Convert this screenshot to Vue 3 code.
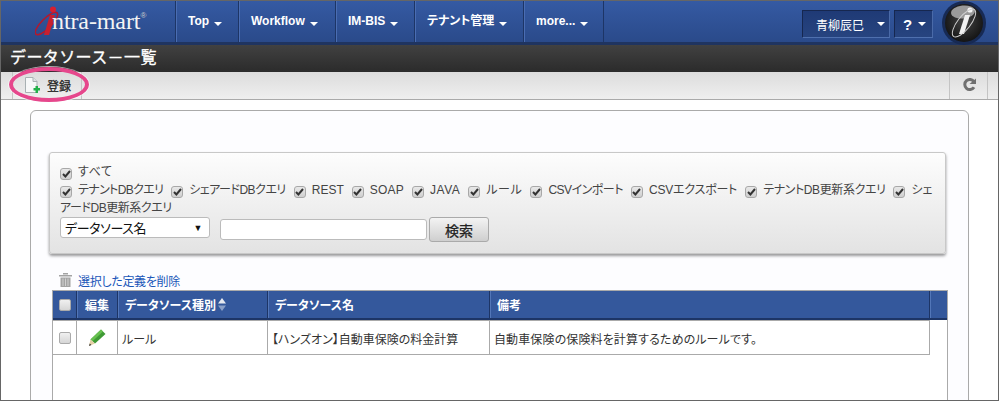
<script setup>
const menus = [
  { label: 'Top', cls: 'w-top' },
  { label: 'Workflow', cls: 'w-workflow' },
  { label: 'IM-BIS', cls: 'w-bis' },
  { label: 'テナント管理', cls: 'w-tenant' },
  { label: 'more...', cls: 'w-more' }
]
const filters = [
  { label: 'テナントDBクエリ', ls: -0.65 },
  { label: 'シェアードDBクエリ', ls: -0.5 },
  { label: 'REST', ls: 0 },
  { label: 'SOAP', ls: 0.25 },
  { label: 'JAVA', ls: 0.5 },
  { label: 'ルール', ls: 0.6 },
  { label: 'CSVインポート', ls: -0.5 },
  { label: 'CSVエクスポート', ls: -0.2 },
  { label: 'テナントDB更新系クエリ', ls: -0.4 }
]
</script>

<template>
  <div class="page">
    <header class="nav">
      <div class="logo">
        <svg class="logo-mark" width="26" height="34" viewBox="0 0 26 34">
          <ellipse cx="11.5" cy="17.5" rx="15" ry="5" transform="rotate(-45 11.5 17.5)" fill="none" stroke="#b5182c" stroke-width="1.5"/>
          <circle cx="18" cy="3.5" r="3" fill="#d81f30"/>
          <path d="M15 9 L20 9 L14 29 L9 29 Z" fill="#c8202f"/>
        </svg>
        <span class="logo-text">ntra-mart</span><span class="logo-reg">®</span>
      </div>
      <div v-for="m in menus" :key="m.label" class="menu" :class="m.cls">
        <span>{{ m.label }}</span><i class="caret"></i>
      </div>
      <div class="nav-right">
        <div class="nbtn user">青柳辰巳<i class="caret"></i></div>
        <div class="nbtn help"><b>?</b><i class="caret"></i></div>
        <svg class="badge" width="44" height="44" viewBox="0 0 44 44">
          <defs>
            <radialGradient id="bd" cx="50%" cy="45%" r="55%">
              <stop offset="0" stop-color="#444"/>
              <stop offset="1" stop-color="#141414"/>
            </radialGradient>
          </defs>
          <circle cx="22" cy="22" r="22" fill="#172a54"/>
          <circle cx="22" cy="22" r="19" fill="url(#bd)"/>
          <ellipse cx="21" cy="11" rx="12" ry="6.5" transform="rotate(-6 21 11)" fill="#9a9a9a"/>
          <circle cx="28" cy="9" r="2.6" fill="#f4f4f4"/>
          <path d="M23 14 L28 14 L22 33 L17 33 Z" fill="#f1f1f1"/>
          <ellipse cx="22" cy="22" rx="17" ry="6.5" transform="rotate(-52 22 22)" fill="none" stroke="#cfcfcf" stroke-width="1"/>
        </svg>
      </div>
    </header>

    <div class="title">データソース－一覧</div>

    <div class="toolbar">
      <div class="reg">
        <svg width="15" height="17" viewBox="0 0 15 17">
          <path d="M.5 .5 H8 L12 4.5 V15.5 H.5 Z" fill="#f7f8f8" stroke="#a9b1b3"/>
          <path d="M8 .5 V4.5 H12" fill="#dfe4e6" stroke="#a9b1b3"/>
          <path d="M8.5 11 H10.5 V9 H13 V11 H15 V13.5 H13 V16 H10.5 V13.5 H8.5 Z" fill="#23b04a"/>
        </svg>
        <span>登録</span>
      </div>
      <div class="tool-right">
        <svg width="14" height="13" viewBox="0 0 14 13">
          <path d="M12 3.8 A5 5 0 1 0 12 9.2" fill="none" stroke="#707070" stroke-width="3"/>
          <path d="M7.5 6 H14 V0.5 Z" fill="#707070"/>
        </svg>
      </div>
      <span class="ring"></span>
    </div>

    <main class="content">
      <section class="card">
        <div class="panel">
          <div class="checks">
            <label class="chk all"><span class="cb"><svg width="9" height="8" viewBox="0 0 9 8"><path d="M1 4 L3.4 6.5 L8 1" fill="none" stroke="#333" stroke-width="2"/></svg></span>すべて</label>
            <br>
            <label v-for="f in filters" :key="f.label" class="chk" :style="{ letterSpacing: f.ls + 'px' }"><span class="cb"><svg width="9" height="8" viewBox="0 0 9 8"><path d="M1 4 L3.4 6.5 L8 1" fill="none" stroke="#333" stroke-width="2"/></svg></span>{{ f.label }}</label>
            <label class="chk last"><span class="cb"><svg width="9" height="8" viewBox="0 0 9 8"><path d="M1 4 L3.4 6.5 L8 1" fill="none" stroke="#333" stroke-width="2"/></svg></span>シェ</label>
            <br>
            <span class="cont">アードDB更新系クエリ</span>
          </div>
          <div class="search">
            <div class="select"><span>データソース名</span><i>▼</i></div>
            <div class="input"></div>
            <div class="btn">検索</div>
          </div>
        </div>

        <div class="del">
          <svg width="13" height="14" viewBox="0 0 13 14">
            <path d="M0 2 H13 V3.5 H0 Z M4 0 H9 V1.5 H4 Z" fill="#a3a3a3"/>
            <path d="M1.5 4.5 H11.5 V14 H1.5 Z" fill="#a3a3a3"/>
            <path d="M4 5.5 V13 M6.5 5.5 V13 M9 5.5 V13" stroke="#d0d0d0"/>
          </svg>
          <a>選択した定義を削除</a>
        </div>

        <div class="table">
          <div class="thead">
            <div class="th c"><span class="box"></span></div>
            <div class="th c">編集</div>
            <div class="th">データソース種別
              <svg class="sort" width="8" height="13" viewBox="0 0 8 13">
                <path d="M4 0 L8 5.5 H0 Z" fill="#e6e9f0"/>
                <path d="M0 7.5 H8 L4 13 Z" fill="#8aa0c8"/>
              </svg>
            </div>
            <div class="th">データソース名</div>
            <div class="th">備考</div>
            <div class="th end"></div>
          </div>
          <div class="tr">
            <div class="td c"><span class="box"></span></div>
            <div class="td c">
              <svg width="17" height="17" viewBox="0 0 17 17">
                <path d="M12 0.5 L16.5 5 L6 14.5 L1.5 10.5 Z" fill="#3f9a35"/>
                <path d="M12 0.5 L14 2.5 L3.5 12.3 L1.5 10.5 Z" fill="#67c04f"/>
                <path d="M1.5 10.5 L6 14.5 L0 17 Z" fill="#e3cfa5"/>
                <path d="M0.8 14.5 L2.4 16 L0 17 Z" fill="#333"/>
              </svg>
            </div>
            <div class="td">ルール</div>
            <div class="td">【ハンズオン】自動車保険の料金計算</div>
            <div class="td note">自動車保険の保険料を計算するためのルールです。</div>
          </div>
        </div>
      </section>
    </main>
  </div>
</template>

<style>
html, body { margin: 0; padding: 0; background: #fff; overflow: hidden; }
</style>

<style scoped>
.page {
  box-sizing: border-box;
  width: 999px;
  height: 401px;
  border: 1px solid #666;
  overflow: hidden;
  display: flex;
  flex-direction: column;
  font-family: "Liberation Sans", "Noto Sans CJK JP", sans-serif;
  font-feature-settings: "palt" 1;
  font-size: 12px;
  color: #333;
  background: #fff;
}
.nav {
  flex: none;
  height: 44px;
  box-sizing: border-box;
  display: flex;
  background: linear-gradient(#355aa3, #2a4a8a);
  border-bottom: 3px solid #1f3460;
}
.logo {
  width: 174px;
  box-sizing: border-box;
  display: flex;
  align-items: flex-start;
  padding: 5px 0 0 34px;
}
.logo-text {
  font-family: "Liberation Serif", serif;
  font-size: 24px;
  line-height: 30px;
  color: #f4f4f4;
  margin-left: -9px;
  letter-spacing: -.1px;
}
.logo-reg { color: #ccc; font-size: 8px; line-height: 10px; margin-top: 5px; }
.menu {
  box-sizing: border-box;
  height: 41px;
  display: flex;
  align-items: flex-start;
  gap: 5px;
  padding: 13px 0 0 12px;
  border-left: 1px solid #1d3566;
  box-shadow: inset 1px 0 0 #4a6db3;
  color: #fff;
  font-weight: bold;
  font-size: 12px;
  line-height: 15px;
  white-space: nowrap;
}
.w-top { width: 63px; }
.w-workflow { width: 97px; }
.w-bis { width: 79px; }
.w-tenant { width: 109px; }
.w-more { width: 81px; border-right: 1px solid #1d3566; }
.menu .caret { margin-top: 8px; }
.caret {
  display: inline-block;
  width: 0;
  height: 0;
  border-left: 4px solid transparent;
  border-right: 4px solid transparent;
  border-top: 4px solid #fff;
}
.nav-right {
  flex: 1;
  display: flex;
  justify-content: flex-end;
  align-items: flex-start;
  padding: 0 12px 0 0;
  gap: 4px;
}
.nbtn {
  box-sizing: border-box;
  height: 28px;
  margin-top: 9px;
  display: flex;
  align-items: center;
  color: #fff;
  background: linear-gradient(#1f3a76, #27447f);
  border: 1px solid #16274f;
  border-right-color: #4a6aa8;
  border-bottom-color: #4f70ae;
  white-space: nowrap;
}
.user { width: 88px; padding-left: 13px; font-size: 12px; gap: 13px; }
.help { width: 39px; padding-left: 8px; gap: 6px; font-size: 15px; }
.badge { margin-left: 5px; }

.title {
  flex: none;
  height: 27px;
  box-sizing: border-box;
  padding-left: 9px;
  font-size: 16px;
  font-feature-settings: normal;
  letter-spacing: .4px;
  line-height: 25px;
  color: #fff;
  -webkit-text-stroke: .3px #fff;
  background: linear-gradient(#414141, #2b2b2b);
  white-space: nowrap;
}

.toolbar {
  flex: none;
  height: 28px;
  box-sizing: border-box;
  display: flex;
  justify-content: space-between;
  position: relative;
  background: linear-gradient(#dcdcdc, #efefef);
  border-bottom: 1px solid #aaa;
}
.reg {
  margin-left: 11px;
  width: 70px;
  box-sizing: border-box;
  border-left: 1px solid #c4c4c4;
  border-right: 1px solid #c4c4c4;
  display: flex;
  align-items: center;
  gap: 7px;
  padding: 0 0 0 12px;
  font-size: 12px;
  color: #222;
  -webkit-text-stroke: .25px #222;
}
.tool-right {
  margin-right: 10px;
  width: 39px;
  box-sizing: border-box;
  border-left: 1px solid #c4c4c4;
  border-right: 1px solid #c4c4c4;
  display: flex;
  align-items: center;
  justify-content: center;
  padding-bottom: 2px;
}
.ring {
  position: absolute;
  left: 8px;
  top: -5px;
  width: 80px;
  height: 35px;
  box-sizing: border-box;
  border: 4px solid #e6478c;
  border-radius: 50%;
  box-shadow: 0 0 0 1px rgba(255,255,255,.6);
}

.content {
  flex: 1;
  min-height: 0;
  padding: 10px 0 0 29px;
}
.card {
  width: 939px;
  height: 400px;
  box-sizing: border-box;
  border: 1px solid #aaa;
  border-radius: 6px;
  background: #fdfdff;
  padding: 41px 0 0 18px;
}
.panel {
  width: 897px;
  height: 102px;
  box-sizing: border-box;
  border: 1px solid #c8c8c8;
  border-radius: 3px;
  padding: 10px 0 0 10px;
  background: linear-gradient(#fdfdfd, #e3e3e3);
  box-shadow: 0 2px 3px rgba(0,0,0,.4);
}
.checks {
  font-size: 12px;
  line-height: 18px;
  color: #444;
  white-space: nowrap;
}
.chk { margin-right: 8px; }
.chk.last { margin-right: 0; }
.chk.all { letter-spacing: .6px; }
.cont { letter-spacing: -.45px; }
.cb {
  display: inline-flex;
  align-items: center;
  justify-content: center;
  vertical-align: -2px;
  box-sizing: border-box;
  width: 12px;
  height: 12px;
  margin-right: 6px;
  border: 1px solid #a8a8a8;
  border-radius: 3px;
  background: linear-gradient(#e8e8e8, #cfcfcf);
}
.search {
  display: flex;
  align-items: flex-start;
}
.select {
  box-sizing: border-box;
  width: 150px;
  height: 21px;
  display: flex;
  justify-content: space-between;
  align-items: center;
  padding: 0 7px 0 4px;
  background: #fff;
  border: 1px solid #bbb;
  border-radius: 3px;
  font-size: 13px;
  letter-spacing: -.4px;
  color: #111;
}
.select i { font-style: normal; font-size: 9px; }
.input {
  box-sizing: border-box;
  width: 207px;
  height: 21px;
  margin: 2px 2px 0 10px;
  background: #fff;
  border: 1px solid #bbb;
  border-radius: 3px;
}
.btn {
  box-sizing: border-box;
  width: 60px;
  height: 25px;
  display: flex;
  align-items: center;
  justify-content: center;
  border: 1px solid #aaa;
  border-radius: 3px;
  background: linear-gradient(#f3f3f3, #cfcfcf);
  font-size: 14px;
  color: #222;
  -webkit-text-stroke: .25px #222;
}
.del {
  height: 18px;
  margin: 17px 0 1px 10px;
  display: flex;
  align-items: center;
  gap: 6px;
}
.del a { color: #1a56b8; font-size: 12px; letter-spacing: -.3px; }
.table {
  width: 896px;
  height: 120px;
  margin-left: 3px;
  box-sizing: border-box;
  border-top: 1px solid #aaa;
  border-left: 1px solid #aaa;
  border-right: 1px solid #aaa;
  background: #fff;
}
.thead, .tr {
  display: grid;
  grid-template-columns: 24px 41px 150px 222px 440px 17px;
}
.thead {
  height: 29px;
  box-sizing: border-box;
  background: #34589c;
  border-bottom: 2px solid #1d3566;
}
.th {
  display: flex;
  align-items: center;
  padding-left: 7px;
  color: #fff;
  font-weight: bold;
  font-size: 12px;
  border-right: 1px solid #1d3566;
  box-shadow: 1px 0 0 #5276b8;
  white-space: nowrap;
}
.th.end { border: 0; box-shadow: none; }
.th.c, .td.c { justify-content: center; padding-left: 0; }
.sort { margin-left: 2px; }
.box {
  display: block;
  box-sizing: border-box;
  width: 12px;
  height: 12px;
  border: 1px solid #aaa;
  border-radius: 2px;
  background: linear-gradient(#f0f0f0, #d6d6d6);
}
.tr {
  width: 877px;
  height: 35px;
  box-sizing: border-box;
  border-top: 1px solid #aaa;
  border-bottom: 1px solid #aaa;
  border-right: 1px solid #aaa;
  grid-template-columns: 24px 41px 150px 222px 439px;
}
.td {
  display: flex;
  align-items: center;
  padding: 2px 0 0 4px;
  font-size: 12px;
  color: #333;
  border-right: 1px solid #aaa;
  white-space: nowrap;
}
.td.c { padding-top: 0; }
.note { letter-spacing: .12px; }
.td:last-child { border-right: 0; }
</style>
